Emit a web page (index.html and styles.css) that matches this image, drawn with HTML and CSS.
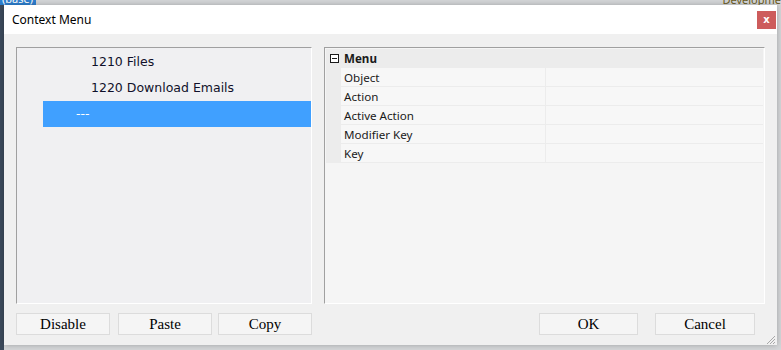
FILE: index.html
```html
<!DOCTYPE html>
<html>
<head>
<meta charset="utf-8">
<link rel="stylesheet" href="styles.css">
</head>
<body>
<div class="backdrop">
  <div class="bg-tab">(base)</div>
  <div class="bg-right">Developme</div>
</div>
<div class="dialog">
  <div class="titlebar">
    <span class="title">Context Menu</span>
    <button class="close">x</button>
  </div>
  <div class="content">
    <div class="panels">
      <div class="list">
        <div class="item lvl2">1210 Files</div>
        <div class="item lvl2">1220 Download Emails</div>
        <div class="item selected">---</div>
      </div>
      <div class="grid">
        <div class="cat">
          <span class="toggle"><svg width="9" height="9" viewBox="0 0 9 9"><rect x="0.5" y="0.5" width="8" height="8" fill="#fff" stroke="#1a1a1a"/><path d="M2 4.5h5" stroke="#1a1a1a"/></svg></span>
          <span class="cat-name">Menu</span>
        </div>
        <div class="row"><span class="gutter"></span><span class="label">Object</span><span class="value"></span></div>
        <div class="row"><span class="gutter"></span><span class="label">Action</span><span class="value"></span></div>
        <div class="row"><span class="gutter"></span><span class="label">Active Action</span><span class="value"></span></div>
        <div class="row"><span class="gutter"></span><span class="label">Modifier Key</span><span class="value"></span></div>
        <div class="row"><span class="gutter"></span><span class="label">Key</span><span class="value"></span></div>
      </div>
    </div>
    <div class="buttons">
      <div class="group-left">
        <button class="btn b-disable">Disable</button>
        <button class="btn b-paste">Paste</button>
        <button class="btn b-copy">Copy</button>
      </div>
      <div class="group-right">
        <button class="btn b-ok">OK</button>
        <button class="btn b-cancel">Cancel</button>
      </div>
    </div>
    <div class="grip"><svg width="11" height="11" viewBox="0 0 11 11"><path d="M10 2L2 10M10 5L5 10M10 8L8 10" stroke="#a8a8a8" stroke-width="1"/></svg></div>
  </div>
</div>
</body>
</html>
```

FILE: styles.css
```css
* { box-sizing: border-box; }
html, body { margin: 0; padding: 0; }
body {
  width: 781px;
  height: 350px;
  overflow: hidden;
  background: #d6d8da;
  position: relative;
  font-family: "Noto Sans", "Open Sans", sans-serif;
}
.backdrop {
  position: absolute;
  inset: 0;
  background: linear-gradient(to right, #3c4a5c 0 4px, #d4d6d8 4px);
}
.bg-tab {
  position: absolute;
  left: 0;
  top: -8px;
  width: 36px;
  height: 13px;
  background: #2d7fd0;
  color: #fff;
  font-size: 11px;
  line-height: 13px;
  padding-left: 2px;
}
.bg-right {
  position: absolute;
  right: 0;
  top: -8px;
  font-size: 11px;
  color: #6a5a20;
}
.dialog {
  position: absolute;
  left: 4px;
  top: 5px;
  width: 773px;
  height: 340px;
  background: #f0f0f0;
  box-shadow: 0 0 6px rgba(0,0,0,0.25);
  display: flex;
  flex-direction: column;
}
.titlebar {
  height: 29px;
  background: #ffffff;
  display: flex;
  align-items: center;
  justify-content: space-between;
  padding-left: 8px;
}
.title {
  font-size: 12px;
  color: #000;
}
.close {
  width: 19px;
  height: 18px;
  margin-top: 1px;
  margin-right: 1px;
  border: none;
  background: #cd5c5c;
  color: #fff;
  font-family: "DejaVu Sans", sans-serif;
  font-weight: bold;
  font-size: 10px;
  line-height: 16px;
  padding: 0;
}
.content {
  flex: 1;
  padding: 13px 12px 0 12px;
  display: flex;
  flex-direction: column;
  position: relative;
}
.panels {
  display: flex;
  gap: 12px;
  height: 257px;
}
.list {
  width: 296px;
  border: 1px solid #a0a0a0;
  border-right-color: #ffffff;
  border-bottom-color: #ffffff;
  background: #f0f0f2;
  padding-top: 1px;
  font-family: "DejaVu Sans", Verdana, sans-serif;
  font-size: 12.5px;
  color: #10102a;
}
.item {
  height: 26px;
  line-height: 26px;
  margin-left: 26px;
  white-space: nowrap;
}
.item.lvl2 { padding-left: 48px; }
.item.selected {
  background: #40a0ff;
  color: #ffffff;
  padding-left: 33px;
}
.grid {
  width: 441px;
  border: 1px solid #a0a0a0;
  border-right-color: #ffffff;
  border-bottom-color: #ffffff;
  background: #f5f5f5;
  padding: 1px 1px 0 1px;
  font-size: 11.6px;
  color: #1a1a1a;
}
.cat {
  height: 19px;
  background: #ececec;
  display: flex;
  align-items: center;
}
.toggle {
  width: 16px;
  display: flex;
  justify-content: center;
  padding-left: 1px;
}
.toggle svg { display: block; }
.cat-name {
  font-weight: bold;
  padding-left: 2px;
}
.row {
  height: 19px;
  display: flex;
  border-bottom: 1px solid #ececec;
}
.gutter {
  width: 15px;
  background: #ececec;
}
.label {
  width: 205px;
  padding-left: 3px;
  padding-top: 1px;
  line-height: 18px;
  border-right: 1px solid #ececec;
  background: #f7f7f7;
}
.value {
  flex: 1;
  background: #f7f7f7;
}
.buttons {
  display: flex;
  justify-content: space-between;
  margin-top: 9px;
  padding-right: 10px;
}
.group-left, .group-right {
  display: flex;
}
.btn {
  height: 22px;
  background: #f5f5f5;
  border: 1px solid #dcdcdc;
  font-family: "Liberation Serif", "Times New Roman", serif;
  font-size: 15px;
  color: #000;
  padding: 0;
  line-height: 20px;
}
.b-disable { width: 94px; }
.b-paste { width: 94px; margin-left: 8px; }
.b-copy { width: 94px; margin-left: 6px; }
.b-ok { width: 99px; }
.b-cancel { width: 100px; margin-left: 17px; }
.grip {
  position: absolute;
  right: 1px;
  bottom: 0;
}
.grip svg { display: block; }
```
